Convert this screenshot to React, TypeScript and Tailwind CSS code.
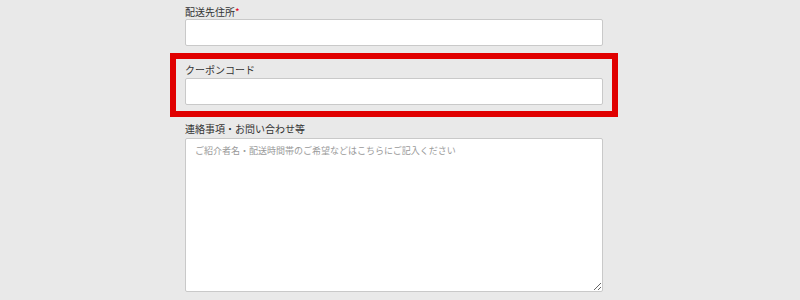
import React from 'react';

const font = { fontFamily: '"Noto Sans CJK JP", "Noto Sans", sans-serif' };

function Label({ children, required }: { children: React.ReactNode; required?: boolean }) {
  return (
    <div className="h-[14px] text-[10px] leading-[14px] text-[#333333]">
      {children}
      {required ? <span className="text-[#e60012]">*</span> : null}
    </div>
  );
}

export default function App() {
  return (
    <div className="h-[300px] w-[800px] overflow-hidden bg-[#e9e9e9]" style={font}>
      <div className="ml-[170px] w-[448px]">
        <div className="px-[15px] pt-[5px]">
          <Label required>配送先住所</Label>
          <input
            type="text"
            className="block h-[27px] w-full rounded-[2px] border border-[#c9c9c9] bg-white outline-none"
          />
        </div>

        <div className="mt-[7px] h-[64px] border-[6px] border-[#e00000] px-[9px] pt-[4px]">
          <Label>クーポンコード</Label>
          <input
            type="text"
            className="mt-[1px] block h-[27px] w-full rounded-[2px] border border-[#c9c9c9] bg-white outline-none"
          />
        </div>

        <div className="px-[15px] pt-[5px]">
          <Label>連絡事項・お問い合わせ等</Label>
          <textarea
            placeholder="ご紹介者名・配送時間帯のご希望などはこちらにご記入ください"
            className="mt-[2px] block h-[154px] w-full rounded-[2px] border border-[#c9c9c9] bg-white px-[9px] py-[6px] text-[9px] leading-[12px] text-[#333333] outline-none placeholder:text-[#9a9a9a]"
          />
        </div>
      </div>
    </div>
  );
}
